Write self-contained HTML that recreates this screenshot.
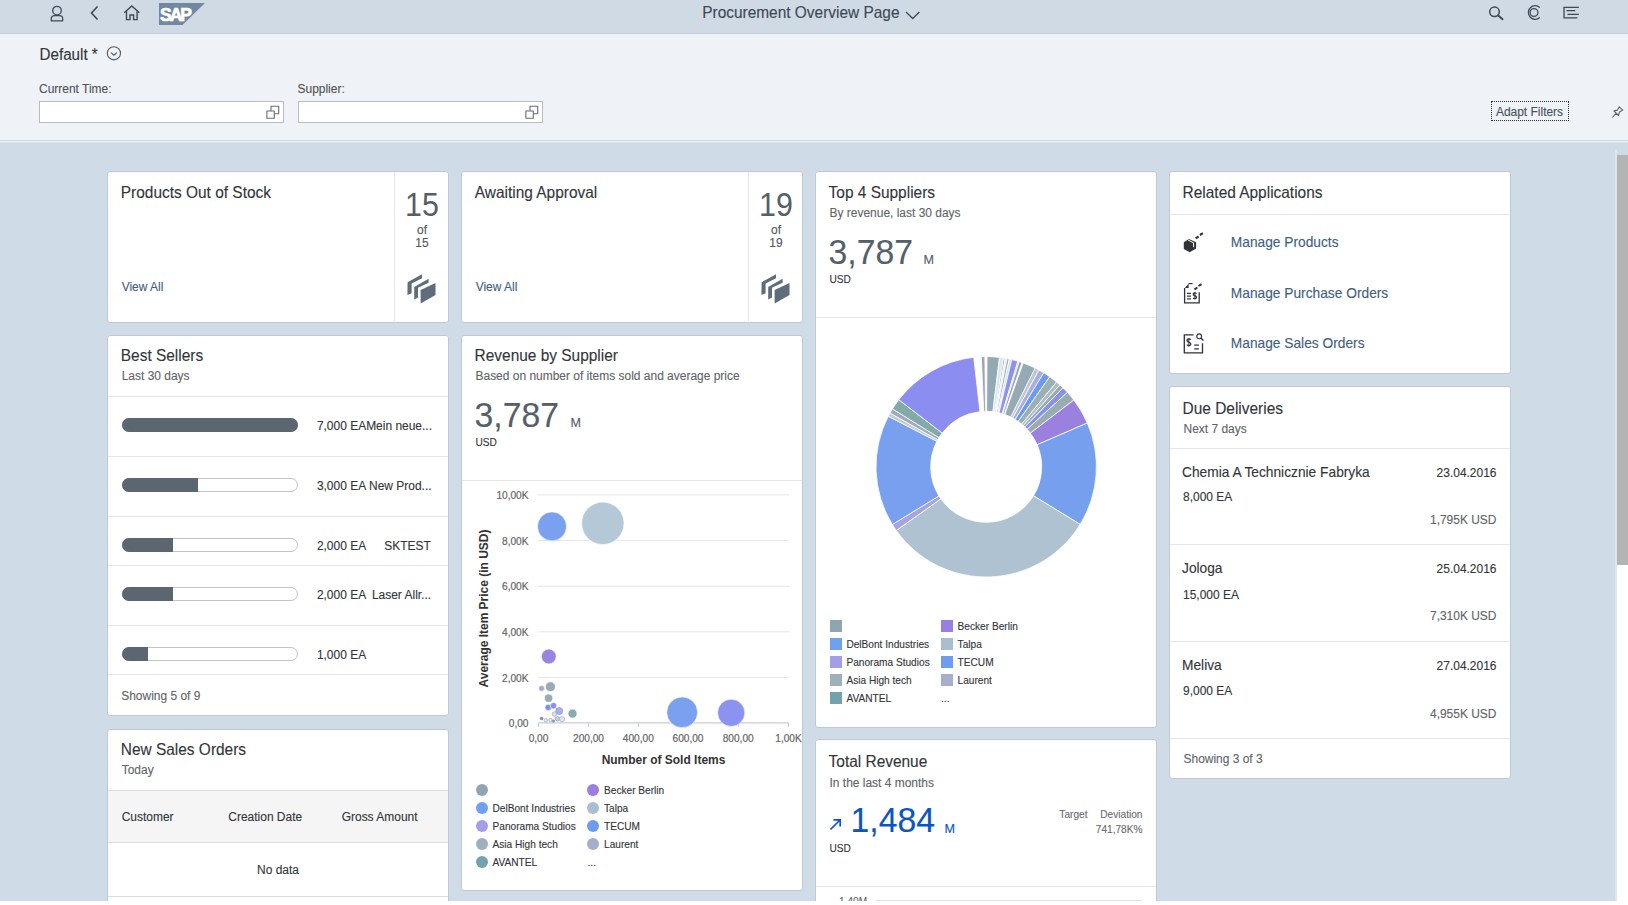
<!DOCTYPE html>
<html><head><meta charset="utf-8"><style>
html,body{margin:0;padding:0;}
body{width:1628px;height:905px;overflow:hidden;position:relative;font-family:"Liberation Sans", sans-serif;background:#cfdbe6;}
.t{position:absolute;white-space:nowrap;-webkit-text-stroke:0.12px currentColor;transform:scaleY(1.04);transform-origin:0 84.67%;}
svg{overflow:visible;}
</style></head><body>
<div style="position:absolute;left:0px;top:0px;width:1628px;height:34px;background:#cfdae5;"></div>
<div style="position:absolute;left:0px;top:33px;width:1628px;height:1px;background:#c6cfd9;"></div>
<div style="position:absolute;left:0px;top:34px;width:1628px;height:106px;background:#eff2f6;"></div>
<div style="position:absolute;left:0px;top:34px;width:1628px;height:1px;background:#eef3fb;"></div>
<div style="position:absolute;left:0px;top:140px;width:1628px;height:1px;background:#d2d9e1;"></div>
<div style="position:absolute;left:0px;top:141px;width:1628px;height:1px;background:#e8eff8;"></div>
<div style="position:absolute;left:0px;top:142px;width:1628px;height:1px;background:#dbe3ec;"></div>
<div style="position:absolute;left:0px;top:143px;width:1628px;height:758px;background:#cfdbe6;"></div>
<svg style="position:absolute;left:48px;top:3px" width="18" height="20" viewBox="0 0 18 20">
<circle cx="9" cy="7.6" r="4.3" fill="none" stroke="#3d4a56" stroke-width="1.3"/>
<path d="M3.3 17.8 V15.6 Q3.3 12.6 6.8 12.6 H11.2 Q14.7 12.6 14.7 15.6 V17.8 Z" fill="none" stroke="#3d4a56" stroke-width="1.3" stroke-linejoin="round"/>
</svg>
<svg style="position:absolute;left:88px;top:4px" width="14" height="18" viewBox="0 0 14 18">
<path d="M9.5 2.5 L3.5 9 L9.5 15.5" fill="none" stroke="#3d4a56" stroke-width="1.6"/>
</svg>
<svg style="position:absolute;left:122px;top:4px" width="20" height="18" viewBox="0 0 20 18">
<path d="M2.2 8.8 L9.8 2 L17.4 8.8" fill="none" stroke="#3d4a56" stroke-width="1.4"/>
<path d="M4.5 7.2 V15.6 H8 V11 H11.6 V15.6 H15.1 V7.2" fill="none" stroke="#3d4a56" stroke-width="1.4"/>
</svg>
<svg style="position:absolute;left:158.5px;top:3px" width="48" height="24" viewBox="0 0 48 24">
<path d="M0 0 H46 L23.5 22 H0 Z" fill="#7089a1"/>
<text x="1.0" y="17.6" font-family="Liberation Sans" font-weight="bold" font-size="17.5" fill="#ffffff" stroke="#ffffff" stroke-width="0.7" letter-spacing="-2">SAP</text>
</svg>
<div class="t" style="left:702.2px;top:4.72px;font-size:15.45px;line-height:15.45px;color:#3d4853;font-weight:normal;">Procurement Overview Page</div>
<svg style="position:absolute;left:904px;top:9px" width="18" height="12" viewBox="0 0 18 12">
<path d="M2 3 L8.7 9.5 L15.4 3" fill="none" stroke="#3d4a56" stroke-width="1.3"/>
</svg>
<svg style="position:absolute;left:1486px;top:3px" width="20" height="20" viewBox="0 0 20 20">
<circle cx="8.5" cy="8.8" r="4.8" fill="none" stroke="#3d4a56" stroke-width="1.5"/>
<path d="M12 12.3 L16.5 16.2" stroke="#3d4a56" stroke-width="2" stroke-linecap="round"/>
</svg>
<svg style="position:absolute;left:1524px;top:2px" width="20" height="20" viewBox="0 0 20 20">
<path d="M15.8 5.5 A6.8 6.8 0 1 0 15.8 15.5" fill="none" stroke="#3d4a56" stroke-width="1.3"/>
<circle cx="10" cy="10.5" r="3.9" fill="none" stroke="#3d4a56" stroke-width="1.3"/>
</svg>
<svg style="position:absolute;left:1560px;top:2px" width="22" height="20" viewBox="0 0 22 20">
<path d="M18.8 5.4 H4 V15.8 H17.4" fill="none" stroke="#3d4a56" stroke-width="1.3"/>
<path d="M6.5 8.7 H15.3 M7.5 12.3 H18.8" stroke="#3d4a56" stroke-width="1.3"/>
</svg>
<div class="t" style="left:39.5px;top:46.73px;font-size:15.2px;line-height:15.2px;color:#32363a;font-weight:normal;">Default *</div>
<svg style="position:absolute;left:105px;top:45px" width="17" height="17" viewBox="0 0 17 17">
<circle cx="8.9" cy="8.3" r="6.6" fill="none" stroke="#4f5963" stroke-width="1.1"/>
<path d="M6 7.6 L8.9 10.2 L11.8 7.6" fill="none" stroke="#4f5963" stroke-width="1.1"/>
</svg>
<div class="t" style="left:39px;top:84.07px;font-size:11.97px;line-height:11.97px;color:#4f5358;font-weight:normal;">Current Time:</div>
<div style="position:absolute;left:39px;top:101px;width:245px;height:22px;box-sizing:border-box;background:#fff;border:1px solid #b8bdc2;"></div>
<svg style="position:absolute;left:265px;top:105px" width="14" height="14" viewBox="0 0 14 14">
<path d="M1.9 6 H9.3 V13.2 H1.9 Z M6 6 V1.3 H13.7 V8.8 H9.3" fill="none" stroke="#666d74" stroke-width="1.1" stroke-linejoin="round"/>
</svg>
<div class="t" style="left:297.5px;top:84.07px;font-size:11.97px;line-height:11.97px;color:#4f5358;font-weight:normal;">Supplier:</div>
<div style="position:absolute;left:297.5px;top:101px;width:245px;height:22px;box-sizing:border-box;background:#fff;border:1px solid #b8bdc2;"></div>
<svg style="position:absolute;left:523.5px;top:105px" width="14" height="14" viewBox="0 0 14 14">
<path d="M1.9 6 H9.3 V13.2 H1.9 Z M6 6 V1.3 H13.7 V8.8 H9.3" fill="none" stroke="#666d74" stroke-width="1.1" stroke-linejoin="round"/>
</svg>
<div style="position:absolute;left:1491px;top:101px;width:78px;height:20px;box-sizing:border-box;border:1px dotted #2b2f33;"></div>
<div class="t" style="left:1529.5px;transform:translateX(-50%) scaleY(1.04);top:106.67px;font-size:11.97px;line-height:11.97px;color:#475360;font-weight:normal;">Adapt Filters</div>
<svg style="position:absolute;left:1610px;top:104px" width="15" height="15" viewBox="0 0 15 15">
<path d="M3.9 6.9 L7.5 6.1 L9.2 2.8 L12.8 6.1 L9.5 8 L8.5 11.5 Z M2.3 13.5 L6 9.4" fill="none" stroke="#5d666f" stroke-width="1.1" stroke-linejoin="round"/>
</svg>
<div style="position:absolute;left:107px;top:171px;width:342px;height:152px;box-sizing:border-box;background:#fff;border:1px solid #c0c9d3;border-radius:3px;"></div>
<div class="t" style="left:120.8px;top:185.02px;font-size:15.45px;line-height:15.45px;color:#32363a;font-weight:normal;">Products Out of Stock</div>
<div class="t" style="left:121.7px;top:281.67px;font-size:11.97px;line-height:11.97px;color:#41607f;font-weight:normal;">View All</div>
<div style="position:absolute;left:394px;top:172px;width:1px;height:149px;background:#e5e5e5;"></div>
<div class="t" style="top:189.86px;font-size:30.4px;line-height:30.4px;color:#545f69;font-weight:normal;left:422px;transform:translateX(-50%) scaleY(1.1);transform-origin:50% 84.67%;-webkit-text-stroke:0;">15</div>
<div class="t" style="left:422px;transform:translateX(-50%) scaleY(1.04);top:224.87px;font-size:11.97px;line-height:11.97px;color:#50575e;font-weight:normal;">of</div>
<div class="t" style="left:422px;transform:translateX(-50%) scaleY(1.04);top:238.47px;font-size:11.97px;line-height:11.97px;color:#50575e;font-weight:normal;">15</div>
<svg style="position:absolute;left:405px;top:272px" width="34" height="34" viewBox="0 0 34 34">
<path d="M2.6 10.2 L17 2.3 V6.3 L6.6 11.6 V21.2 L2.4 22.9 Z" fill="#5f6c79"/>
<path d="M9.2 15 L23.6 6.8 V10.7 L13 15.8 V25.6 L9.2 27.4 Z" fill="#5f6c79"/>
<path d="M15.6 18.1 L30.5 11 V23 L15.6 31.4 Z" fill="#5f6c79"/>
</svg>
<div style="position:absolute;left:461px;top:171px;width:342px;height:152px;box-sizing:border-box;background:#fff;border:1px solid #c0c9d3;border-radius:3px;"></div>
<div class="t" style="left:474.8px;top:185.02px;font-size:15.45px;line-height:15.45px;color:#32363a;font-weight:normal;">Awaiting Approval</div>
<div class="t" style="left:475.7px;top:281.67px;font-size:11.97px;line-height:11.97px;color:#41607f;font-weight:normal;">View All</div>
<div style="position:absolute;left:748px;top:172px;width:1px;height:149px;background:#e5e5e5;"></div>
<div class="t" style="top:189.86px;font-size:30.4px;line-height:30.4px;color:#545f69;font-weight:normal;left:776px;transform:translateX(-50%) scaleY(1.1);transform-origin:50% 84.67%;-webkit-text-stroke:0;">19</div>
<div class="t" style="left:776px;transform:translateX(-50%) scaleY(1.04);top:224.87px;font-size:11.97px;line-height:11.97px;color:#50575e;font-weight:normal;">of</div>
<div class="t" style="left:776px;transform:translateX(-50%) scaleY(1.04);top:238.47px;font-size:11.97px;line-height:11.97px;color:#50575e;font-weight:normal;">19</div>
<svg style="position:absolute;left:759px;top:272px" width="34" height="34" viewBox="0 0 34 34">
<path d="M2.6 10.2 L17 2.3 V6.3 L6.6 11.6 V21.2 L2.4 22.9 Z" fill="#5f6c79"/>
<path d="M9.2 15 L23.6 6.8 V10.7 L13 15.8 V25.6 L9.2 27.4 Z" fill="#5f6c79"/>
<path d="M15.6 18.1 L30.5 11 V23 L15.6 31.4 Z" fill="#5f6c79"/>
</svg>
<div style="position:absolute;left:107px;top:335px;width:342px;height:381px;box-sizing:border-box;background:#fff;border:1px solid #c0c9d3;border-radius:3px;"></div>
<div class="t" style="left:120.8px;top:348.02px;font-size:15.45px;line-height:15.45px;color:#32363a;font-weight:normal;">Best Sellers</div>
<div class="t" style="left:121.7px;top:371.17px;font-size:11.97px;line-height:11.97px;color:#616569;font-weight:normal;">Last 30 days</div>
<div style="position:absolute;left:108px;top:396px;width:340px;height:1px;background:#e5e5e5;"></div>
<div style="position:absolute;left:122px;top:418px;width:176px;height:14px;box-sizing:border-box;border:1px solid #c4c4c4;border-radius:7px;background:#fff;"></div>
<div style="position:absolute;left:122px;top:418px;width:176px;height:14px;background:#5b6670;border-radius:7px;"></div>
<div class="t" style="left:316.9px;top:420.77px;font-size:11.97px;line-height:11.97px;color:#32363a;font-weight:normal;">7,000 EAMein neue...</div>
<div style="position:absolute;left:108px;top:456px;width:340px;height:1px;background:#e5e5e5;"></div>
<div style="position:absolute;left:122px;top:478px;width:176px;height:14px;box-sizing:border-box;border:1px solid #c4c4c4;border-radius:7px;background:#fff;"></div>
<div style="position:absolute;left:122px;top:478px;width:75.67999999999999px;height:14px;background:#5b6670;border-radius:7px 0 0 7px;"></div>
<div class="t" style="left:316.9px;top:480.77px;font-size:11.97px;line-height:11.97px;color:#32363a;font-weight:normal;">3,000 EA</div>
<div class="t" style="left:369px;top:480.77px;font-size:11.97px;line-height:11.97px;color:#32363a;font-weight:normal;">New Prod...</div>
<div style="position:absolute;left:108px;top:516px;width:340px;height:1px;background:#e5e5e5;"></div>
<div style="position:absolute;left:122px;top:538px;width:176px;height:14px;box-sizing:border-box;border:1px solid #c4c4c4;border-radius:7px;background:#fff;"></div>
<div style="position:absolute;left:122px;top:538px;width:51.04px;height:14px;background:#5b6670;border-radius:7px 0 0 7px;"></div>
<div class="t" style="left:316.9px;top:540.97px;font-size:11.97px;line-height:11.97px;color:#32363a;font-weight:normal;">2,000 EA</div>
<div class="t" style="left:384.2px;top:540.97px;font-size:11.97px;line-height:11.97px;color:#32363a;font-weight:normal;">SKTEST</div>
<div style="position:absolute;left:108px;top:565px;width:340px;height:1px;background:#e5e5e5;"></div>
<div style="position:absolute;left:122px;top:587px;width:176px;height:14px;box-sizing:border-box;border:1px solid #c4c4c4;border-radius:7px;background:#fff;"></div>
<div style="position:absolute;left:122px;top:587px;width:51.04px;height:14px;background:#5b6670;border-radius:7px 0 0 7px;"></div>
<div class="t" style="left:316.9px;top:589.57px;font-size:11.97px;line-height:11.97px;color:#32363a;font-weight:normal;">2,000 EA</div>
<div class="t" style="left:371.9px;top:589.57px;font-size:11.97px;line-height:11.97px;color:#32363a;font-weight:normal;">Laser Allr...</div>
<div style="position:absolute;left:108px;top:625px;width:340px;height:1px;background:#e5e5e5;"></div>
<div style="position:absolute;left:122px;top:647px;width:176px;height:14px;box-sizing:border-box;border:1px solid #c4c4c4;border-radius:7px;background:#fff;"></div>
<div style="position:absolute;left:122px;top:647px;width:25.52px;height:14px;background:#5b6670;border-radius:7px 0 0 7px;"></div>
<div class="t" style="left:316.9px;top:649.87px;font-size:11.97px;line-height:11.97px;color:#32363a;font-weight:normal;">1,000 EA</div>
<div style="position:absolute;left:108px;top:674px;width:340px;height:1px;background:#e5e5e5;"></div>
<div class="t" style="left:121.2px;top:690.97px;font-size:11.97px;line-height:11.97px;color:#616569;font-weight:normal;">Showing 5 of 9</div>
<div style="position:absolute;left:107px;top:729px;width:342px;height:200px;box-sizing:border-box;background:#fff;border:1px solid #c0c9d3;border-radius:3px;"></div>
<div class="t" style="left:120.8px;top:742.32px;font-size:15.45px;line-height:15.45px;color:#32363a;font-weight:normal;">New Sales Orders</div>
<div class="t" style="left:121.7px;top:765.27px;font-size:11.97px;line-height:11.97px;color:#616569;font-weight:normal;">Today</div>
<div style="position:absolute;left:108px;top:790px;width:340px;height:53px;background:#f5f5f5;border-top:1px solid #dddddd;border-bottom:1px solid #dddddd;box-sizing:border-box;"></div>
<div class="t" style="left:121.7px;top:812.37px;font-size:11.97px;line-height:11.97px;color:#32363a;font-weight:normal;">Customer</div>
<div class="t" style="left:228.3px;top:812.37px;font-size:11.97px;line-height:11.97px;color:#32363a;font-weight:normal;">Creation Date</div>
<div class="t" style="left:341.7px;top:812.37px;font-size:11.97px;line-height:11.97px;color:#32363a;font-weight:normal;">Gross Amount</div>
<div class="t" style="left:278px;transform:translateX(-50%) scaleY(1.04);top:865.47px;font-size:11.97px;line-height:11.97px;color:#32363a;font-weight:normal;">No data</div>
<div style="position:absolute;left:108px;top:896px;width:340px;height:1px;background:#dddddd;"></div>
<div style="position:absolute;left:461px;top:335px;width:342px;height:556px;box-sizing:border-box;background:#fff;border:1px solid #c0c9d3;border-radius:3px;"></div>
<div class="t" style="left:474.6px;top:348.42px;font-size:15.45px;line-height:15.45px;color:#32363a;font-weight:normal;">Revenue by Supplier</div>
<div class="t" style="left:475.5px;top:370.97px;font-size:11.97px;line-height:11.97px;color:#616569;font-weight:normal;">Based on number of items sold and average price</div>
<div class="t" style="left:474.5px;top:398.98px;font-size:33.8px;line-height:33.8px;color:#545f69;font-weight:normal;">3,787</div>
<div class="t" style="left:570.5px;top:417.13px;font-size:12.6px;line-height:12.6px;color:#545f69;font-weight:normal;">M</div>
<div class="t" style="left:475.5px;top:437.91px;font-size:10.14px;line-height:10.14px;color:#32363a;font-weight:normal;">USD</div>
<div style="position:absolute;left:462px;top:480px;width:340px;height:1px;background:#e5e5e5;"></div>
<svg style="position:absolute;left:0;top:0" width="1628" height="905" viewBox="0 0 1628 905">
<line x1="538" y1="494.9" x2="789" y2="494.9" stroke="#e3e6e9" stroke-width="1"/>
<text x="528.5" y="499.09999999999997" text-anchor="end" font-family="Liberation Sans" font-size="10.14" fill="#666" stroke="#666" stroke-width="0.2">10,00K</text>
<line x1="538" y1="540.6" x2="789" y2="540.6" stroke="#e3e6e9" stroke-width="1"/>
<text x="528.5" y="544.8000000000001" text-anchor="end" font-family="Liberation Sans" font-size="10.14" fill="#666" stroke="#666" stroke-width="0.2">8,00K</text>
<line x1="538" y1="586.2" x2="789" y2="586.2" stroke="#e3e6e9" stroke-width="1"/>
<text x="528.5" y="590.4000000000001" text-anchor="end" font-family="Liberation Sans" font-size="10.14" fill="#666" stroke="#666" stroke-width="0.2">6,00K</text>
<line x1="538" y1="631.8" x2="789" y2="631.8" stroke="#e3e6e9" stroke-width="1"/>
<text x="528.5" y="636.0" text-anchor="end" font-family="Liberation Sans" font-size="10.14" fill="#666" stroke="#666" stroke-width="0.2">4,00K</text>
<line x1="538" y1="677.4" x2="789" y2="677.4" stroke="#e3e6e9" stroke-width="1"/>
<text x="528.5" y="681.6" text-anchor="end" font-family="Liberation Sans" font-size="10.14" fill="#666" stroke="#666" stroke-width="0.2">2,00K</text>
<line x1="538" y1="722.9" x2="789" y2="722.9" stroke="#e3e6e9" stroke-width="1"/>
<text x="528.5" y="727.1" text-anchor="end" font-family="Liberation Sans" font-size="10.14" fill="#666" stroke="#666" stroke-width="0.2">0,00</text>
<line x1="538" y1="722.9" x2="789" y2="722.9" stroke="#c9ccd0" stroke-width="1"/>
<line x1="538.5" y1="723" x2="538.5" y2="727" stroke="#c9ccd0" stroke-width="1"/>
<text x="538.5" y="741.8" text-anchor="middle" font-family="Liberation Sans" font-size="10.14" fill="#666" stroke="#666" stroke-width="0.2">0,00</text>
<line x1="588.5" y1="723" x2="588.5" y2="727" stroke="#c9ccd0" stroke-width="1"/>
<text x="588.5" y="741.8" text-anchor="middle" font-family="Liberation Sans" font-size="10.14" fill="#666" stroke="#666" stroke-width="0.2">200,00</text>
<line x1="638.3" y1="723" x2="638.3" y2="727" stroke="#c9ccd0" stroke-width="1"/>
<text x="638.3" y="741.8" text-anchor="middle" font-family="Liberation Sans" font-size="10.14" fill="#666" stroke="#666" stroke-width="0.2">400,00</text>
<line x1="688" y1="723" x2="688" y2="727" stroke="#c9ccd0" stroke-width="1"/>
<text x="688" y="741.8" text-anchor="middle" font-family="Liberation Sans" font-size="10.14" fill="#666" stroke="#666" stroke-width="0.2">600,00</text>
<line x1="738.2" y1="723" x2="738.2" y2="727" stroke="#c9ccd0" stroke-width="1"/>
<text x="738.2" y="741.8" text-anchor="middle" font-family="Liberation Sans" font-size="10.14" fill="#666" stroke="#666" stroke-width="0.2">800,00</text>
<line x1="788.5" y1="723" x2="788.5" y2="727" stroke="#c9ccd0" stroke-width="1"/>
<text x="788.5" y="741.8" text-anchor="middle" font-family="Liberation Sans" font-size="10.14" fill="#666" stroke="#666" stroke-width="0.2">1,00K</text>
<text x="663.5" y="764" text-anchor="middle" font-family="Liberation Sans" font-weight="bold" font-size="11.97" fill="#333">Number of Sold Items</text>
<text transform="translate(488.2 608.5) rotate(-90)" text-anchor="middle" font-family="Liberation Sans" font-weight="bold" font-size="11.97" fill="#333">Average Item Price (in USD)</text>
<circle cx="552.0" cy="526.4" r="14.5" fill="#7ba1ee" stroke="#ffffff" stroke-width="0.6"/>
<circle cx="602.8" cy="523.3" r="21.2" fill="#b5c8d8" stroke="#ffffff" stroke-width="0.6"/>
<circle cx="548.8" cy="656.5" r="7.4" fill="#9a84df" stroke="#ffffff" stroke-width="0.6"/>
<circle cx="541.6" cy="688.4" r="2.9" fill="#aaa6cc" stroke="#ffffff" stroke-width="0.6"/>
<circle cx="550.4" cy="686.7" r="4.9" fill="#98aab4" stroke="#ffffff" stroke-width="0.6"/>
<circle cx="548.6" cy="698.2" r="4.1" fill="#98aab4" stroke="#ffffff" stroke-width="0.6"/>
<circle cx="548.2" cy="707.4" r="3.2" fill="#7f8fee" stroke="#ffffff" stroke-width="0.6"/>
<circle cx="553.5" cy="705.7" r="3.2" fill="#8b90ee" stroke="#ffffff" stroke-width="0.6"/>
<circle cx="559.2" cy="711.0" r="3.5" fill="#a9b2e6" stroke="#7f88c8" stroke-width="0.6"/>
<circle cx="554.4" cy="714.0" r="2.3" fill="#d8dde6" stroke="#a0a8b8" stroke-width="0.6"/>
<circle cx="572.5" cy="713.6" r="4.5" fill="#87abb0" stroke="#ffffff" stroke-width="0.6"/>
<circle cx="541.6" cy="718.5" r="1.5" fill="#7f8fb8" stroke="#7f8fb8" stroke-width="0.6"/>
<circle cx="545.8" cy="720.3" r="1.8" fill="#e0e4ec" stroke="#9aa4b8" stroke-width="0.6"/>
<circle cx="550.5" cy="720.0" r="1.8" fill="#e0e4ec" stroke="#9aa4b8" stroke-width="0.6"/>
<circle cx="557.5" cy="718.8" r="2.2" fill="#c8d0e0" stroke="#7f8aa8" stroke-width="0.6"/>
<circle cx="562.0" cy="719.2" r="2.6" fill="#e0e4ec" stroke="#9aa4b8" stroke-width="0.6"/>
<circle cx="553.5" cy="721.0" r="1.3" fill="#8a98b8" stroke="#8a98b8" stroke-width="0.6"/>
<circle cx="682.2" cy="712.3" r="15.4" fill="#7aa0ef" stroke="#ffffff" stroke-width="0.6"/>
<circle cx="731.2" cy="712.8" r="13.6" fill="#8b92f0" stroke="#ffffff" stroke-width="0.6"/>
</svg>
<div style="position:absolute;left:475.8px;top:783.8px;width:12px;height:12px;background:#8fa5b0;border-radius:50%;"></div>
<div style="position:absolute;left:587px;top:783.8px;width:12px;height:12px;background:#9a7fe0;border-radius:50%;"></div>
<div class="t" style="left:604px;top:785.71px;font-size:10.14px;line-height:10.14px;color:#32363a;font-weight:normal;">Becker Berlin</div>
<div style="position:absolute;left:475.8px;top:801.8px;width:12px;height:12px;background:#70a0f0;border-radius:50%;"></div>
<div class="t" style="left:492.5px;top:803.71px;font-size:10.14px;line-height:10.14px;color:#32363a;font-weight:normal;">DelBont Industries</div>
<div style="position:absolute;left:587px;top:801.8px;width:12px;height:12px;background:#a9bfd0;border-radius:50%;"></div>
<div class="t" style="left:604px;top:803.71px;font-size:10.14px;line-height:10.14px;color:#32363a;font-weight:normal;">Talpa</div>
<div style="position:absolute;left:475.8px;top:819.7px;width:12px;height:12px;background:#a49ee8;border-radius:50%;"></div>
<div class="t" style="left:492.5px;top:821.61px;font-size:10.14px;line-height:10.14px;color:#32363a;font-weight:normal;">Panorama Studios</div>
<div style="position:absolute;left:587px;top:819.7px;width:12px;height:12px;background:#6d9cf0;border-radius:50%;"></div>
<div class="t" style="left:604px;top:821.61px;font-size:10.14px;line-height:10.14px;color:#32363a;font-weight:normal;">TECUM</div>
<div style="position:absolute;left:475.8px;top:837.6px;width:12px;height:12px;background:#9eb0bb;border-radius:50%;"></div>
<div class="t" style="left:492.5px;top:839.51px;font-size:10.14px;line-height:10.14px;color:#32363a;font-weight:normal;">Asia High tech</div>
<div style="position:absolute;left:587px;top:837.6px;width:12px;height:12px;background:#a6aecc;border-radius:50%;"></div>
<div class="t" style="left:604px;top:839.51px;font-size:10.14px;line-height:10.14px;color:#32363a;font-weight:normal;">Laurent</div>
<div style="position:absolute;left:475.8px;top:855.6px;width:12px;height:12px;background:#72a3ad;border-radius:50%;"></div>
<div class="t" style="left:492.5px;top:857.51px;font-size:10.14px;line-height:10.14px;color:#32363a;font-weight:normal;">AVANTEL</div>
<div class="t" style="left:587.5px;top:857.51px;font-size:10.14px;line-height:10.14px;color:#32363a;font-weight:normal;">...</div>
<div style="position:absolute;left:815px;top:171px;width:342px;height:557px;box-sizing:border-box;background:#fff;border:1px solid #c0c9d3;border-radius:3px;"></div>
<div class="t" style="left:828.6px;top:185.12px;font-size:15.45px;line-height:15.45px;color:#32363a;font-weight:normal;">Top 4 Suppliers</div>
<div class="t" style="left:829.5px;top:207.97px;font-size:11.97px;line-height:11.97px;color:#616569;font-weight:normal;">By revenue, last 30 days</div>
<div class="t" style="left:828.5px;top:235.58px;font-size:33.8px;line-height:33.8px;color:#545f69;font-weight:normal;">3,787</div>
<div class="t" style="left:923.5px;top:253.73px;font-size:12.6px;line-height:12.6px;color:#545f69;font-weight:normal;">M</div>
<div class="t" style="left:829.5px;top:275.21px;font-size:10.14px;line-height:10.14px;color:#32363a;font-weight:normal;">USD</div>
<div style="position:absolute;left:816px;top:317px;width:340px;height:1px;background:#e5e5e5;"></div>
<svg style="position:absolute;left:0;top:0" width="1628" height="905" viewBox="0 0 1628 905">
<path d="M981.32 356.71 A110.2 110.2 0 0 1 984.85 356.61 L985.52 411.30 A55.5 55.5 0 0 0 983.74 411.35 Z" fill="#9ba3b5" stroke="#fff" stroke-width="0.8"/>
<path d="M987.07 356.60 A110.2 110.2 0 0 1 999.52 357.41 L992.91 411.71 A55.5 55.5 0 0 0 986.64 411.30 Z" fill="#93a9b3" stroke="#fff" stroke-width="0.8"/>
<path d="M999.52 357.41 A110.2 110.2 0 0 1 1003.53 357.97 L994.93 411.99 A55.5 55.5 0 0 0 992.91 411.71 Z" fill="#dbe6ee" stroke="#fff" stroke-width="0.8"/>
<path d="M1003.53 357.97 A110.2 110.2 0 0 1 1005.11 358.23 L995.72 412.12 A55.5 55.5 0 0 0 994.93 411.99 Z" fill="#8a94d8" stroke="#fff" stroke-width="0.8"/>
<path d="M1005.11 358.23 A110.2 110.2 0 0 1 1006.85 358.55 L996.60 412.28 A55.5 55.5 0 0 0 995.72 412.12 Z" fill="#e6edf4" stroke="#fff" stroke-width="0.8"/>
<path d="M1006.85 358.55 A110.2 110.2 0 0 1 1009.30 359.05 L997.83 412.53 A55.5 55.5 0 0 0 996.60 412.28 Z" fill="#a5b3bb" stroke="#fff" stroke-width="0.8"/>
<path d="M1009.30 359.05 A110.2 110.2 0 0 1 1011.74 359.60 L999.06 412.81 A55.5 55.5 0 0 0 997.83 412.53 Z" fill="#d6e0ea" stroke="#fff" stroke-width="0.8"/>
<path d="M1011.74 359.60 A110.2 110.2 0 0 1 1017.87 361.25 L1002.15 413.64 A55.5 55.5 0 0 0 999.06 412.81 Z" fill="#8b92f0" stroke="#fff" stroke-width="0.8"/>
<path d="M1017.87 361.25 A110.2 110.2 0 0 1 1019.15 361.64 L1002.80 413.84 A55.5 55.5 0 0 0 1002.15 413.64 Z" fill="#c8c8f0" stroke="#fff" stroke-width="0.8"/>
<path d="M1019.15 361.64 A110.2 110.2 0 0 1 1022.00 362.58 L1004.23 414.31 A55.5 55.5 0 0 0 1002.80 413.84 Z" fill="#9aa0c0" stroke="#fff" stroke-width="0.8"/>
<path d="M1023.17 362.99 A110.2 110.2 0 0 1 1035.20 368.09 L1010.88 417.09 A55.5 55.5 0 0 0 1004.82 414.52 Z" fill="#96aab4" stroke="#fff" stroke-width="0.8"/>
<path d="M1035.20 368.09 A110.2 110.2 0 0 1 1038.95 370.05 L1012.77 418.07 A55.5 55.5 0 0 0 1010.88 417.09 Z" fill="#b9c8d5" stroke="#fff" stroke-width="0.8"/>
<path d="M1038.95 370.05 A110.2 110.2 0 0 1 1043.78 372.84 L1015.20 419.48 A55.5 55.5 0 0 0 1012.77 418.07 Z" fill="#a9aee0" stroke="#fff" stroke-width="0.8"/>
<path d="M1043.78 372.84 A110.2 110.2 0 0 1 1049.72 376.75 L1018.19 421.45 A55.5 55.5 0 0 0 1015.20 419.48 Z" fill="#6d9af0" stroke="#fff" stroke-width="0.8"/>
<path d="M1049.72 376.75 A110.2 110.2 0 0 1 1056.59 382.01 L1021.65 424.10 A55.5 55.5 0 0 0 1018.19 421.45 Z" fill="#9bb0b5" stroke="#fff" stroke-width="0.8"/>
<path d="M1056.59 382.01 A110.2 110.2 0 0 1 1059.94 384.91 L1023.34 425.56 A55.5 55.5 0 0 0 1021.65 424.10 Z" fill="#aebdc8" stroke="#fff" stroke-width="0.8"/>
<path d="M1059.94 384.91 A110.2 110.2 0 0 1 1063.03 387.80 L1024.89 427.01 A55.5 55.5 0 0 0 1023.34 425.56 Z" fill="#96abb0" stroke="#fff" stroke-width="0.8"/>
<path d="M1063.03 387.80 A110.2 110.2 0 0 1 1067.45 392.35 L1027.12 429.30 A55.5 55.5 0 0 0 1024.89 427.01 Z" fill="#8a90ee" stroke="#fff" stroke-width="0.8"/>
<path d="M1067.45 392.35 A110.2 110.2 0 0 1 1073.86 400.02 L1030.35 433.17 A55.5 55.5 0 0 0 1027.12 429.30 Z" fill="#98acb3" stroke="#fff" stroke-width="0.8"/>
<path d="M1073.86 400.02 A110.2 110.2 0 0 1 1087.34 423.03 L1037.14 444.76 A55.5 55.5 0 0 0 1030.35 433.17 Z" fill="#9a80df" stroke="#fff" stroke-width="0.8"/>
<path d="M1087.34 423.03 A110.2 110.2 0 0 1 1080.16 524.38 L1033.52 495.80 A55.5 55.5 0 0 0 1037.14 444.76 Z" fill="#76a0ee" stroke="#fff" stroke-width="0.8"/>
<path d="M1080.16 524.38 A110.2 110.2 0 0 1 896.26 530.48 L940.90 498.87 A55.5 55.5 0 0 0 1033.52 495.80 Z" fill="#afc2d2" stroke="#fff" stroke-width="0.8"/>
<path d="M896.26 530.48 A110.2 110.2 0 0 1 892.34 524.54 L938.93 495.88 A55.5 55.5 0 0 0 940.90 498.87 Z" fill="#a7a3e2" stroke="#fff" stroke-width="0.8"/>
<path d="M892.34 524.54 A110.2 110.2 0 0 1 888.27 416.26 L936.88 441.34 A55.5 55.5 0 0 0 938.93 495.88 Z" fill="#78a0ee" stroke="#fff" stroke-width="0.8"/>
<path d="M888.27 416.26 A110.2 110.2 0 0 1 890.00 413.04 L937.75 439.72 A55.5 55.5 0 0 0 936.88 441.34 Z" fill="#c0ccd8" stroke="#fff" stroke-width="0.8"/>
<path d="M890.00 413.04 A110.2 110.2 0 0 1 892.44 408.89 L938.98 437.64 A55.5 55.5 0 0 0 937.75 439.72 Z" fill="#a2a9bb" stroke="#fff" stroke-width="0.8"/>
<path d="M892.44 408.89 A110.2 110.2 0 0 1 898.77 399.71 L942.17 433.01 A55.5 55.5 0 0 0 938.98 437.64 Z" fill="#82aaa8" stroke="#fff" stroke-width="0.8"/>
<path d="M898.77 399.71 A110.2 110.2 0 0 1 973.73 357.31 L979.92 411.66 A55.5 55.5 0 0 0 942.17 433.01 Z" fill="#8b8ef0" stroke="#fff" stroke-width="0.8"/>
</svg>
<div style="position:absolute;left:829.5px;top:620.3px;width:12px;height:12px;background:#8fa5b0;"></div>
<div style="position:absolute;left:940.8px;top:620.3px;width:12px;height:12px;background:#9a7fe0;"></div>
<div class="t" style="left:957.6px;top:622.21px;font-size:10.14px;line-height:10.14px;color:#32363a;font-weight:normal;">Becker Berlin</div>
<div style="position:absolute;left:829.5px;top:638.3px;width:12px;height:12px;background:#70a0f0;"></div>
<div class="t" style="left:846.4px;top:640.21px;font-size:10.14px;line-height:10.14px;color:#32363a;font-weight:normal;">DelBont Industries</div>
<div style="position:absolute;left:940.8px;top:638.3px;width:12px;height:12px;background:#a9bfd0;"></div>
<div class="t" style="left:957.6px;top:640.21px;font-size:10.14px;line-height:10.14px;color:#32363a;font-weight:normal;">Talpa</div>
<div style="position:absolute;left:829.5px;top:656.2px;width:12px;height:12px;background:#a49ee8;"></div>
<div class="t" style="left:846.4px;top:658.11px;font-size:10.14px;line-height:10.14px;color:#32363a;font-weight:normal;">Panorama Studios</div>
<div style="position:absolute;left:940.8px;top:656.2px;width:12px;height:12px;background:#6d9cf0;"></div>
<div class="t" style="left:957.6px;top:658.11px;font-size:10.14px;line-height:10.14px;color:#32363a;font-weight:normal;">TECUM</div>
<div style="position:absolute;left:829.5px;top:674.2px;width:12px;height:12px;background:#9eb0bb;"></div>
<div class="t" style="left:846.4px;top:676.11px;font-size:10.14px;line-height:10.14px;color:#32363a;font-weight:normal;">Asia High tech</div>
<div style="position:absolute;left:940.8px;top:674.2px;width:12px;height:12px;background:#a6aecc;"></div>
<div class="t" style="left:957.6px;top:676.11px;font-size:10.14px;line-height:10.14px;color:#32363a;font-weight:normal;">Laurent</div>
<div style="position:absolute;left:829.5px;top:692.1px;width:12px;height:12px;background:#72a3ad;"></div>
<div class="t" style="left:846.4px;top:694.01px;font-size:10.14px;line-height:10.14px;color:#32363a;font-weight:normal;">AVANTEL</div>
<div class="t" style="left:941px;top:694.01px;font-size:10.14px;line-height:10.14px;color:#32363a;font-weight:normal;">...</div>
<div style="position:absolute;left:815px;top:739px;width:342px;height:200px;box-sizing:border-box;background:#fff;border:1px solid #c0c9d3;border-radius:3px;"></div>
<div class="t" style="left:828.6px;top:754.32px;font-size:15.45px;line-height:15.45px;color:#32363a;font-weight:normal;">Total Revenue</div>
<div class="t" style="left:829.5px;top:777.67px;font-size:11.97px;line-height:11.97px;color:#616569;font-weight:normal;">In the last 4 months</div>
<svg style="position:absolute;left:828px;top:816px" width="16" height="16" viewBox="0 0 16 16"><path d="M2.5 13.5 L12 4 M5.5 3.8 H12.2 V10.5" fill="none" stroke="#0b55c2" stroke-width="1.7"/></svg>
<div class="t" style="left:850.5px;top:804.38px;font-size:33.8px;line-height:33.8px;color:#0b55c2;font-weight:normal;">1,484</div>
<div class="t" style="left:944.5px;top:822.53px;font-size:12.6px;line-height:12.6px;color:#0b55c2;font-weight:normal;">M</div>
<div class="t" style="left:829.5px;top:844.21px;font-size:10.14px;line-height:10.14px;color:#32363a;font-weight:normal;">USD</div>
<div class="t" style="right:540.5px;top:810.31px;font-size:10.14px;line-height:10.14px;color:#6a6d70;font-weight:normal;">Target</div>
<div class="t" style="right:485.5px;top:810.31px;font-size:10.14px;line-height:10.14px;color:#6a6d70;font-weight:normal;">Deviation</div>
<div class="t" style="right:485.5px;top:824.61px;font-size:10.14px;line-height:10.14px;color:#6a6d70;font-weight:normal;">741,78K%</div>
<div style="position:absolute;left:816px;top:886px;width:340px;height:1px;background:#e5e5e5;"></div>
<div class="t" style="left:839px;top:896.71px;font-size:10.14px;line-height:10.14px;color:#666;font-weight:normal;">1,40M</div>
<div style="position:absolute;left:876px;top:900px;width:266px;height:1px;background:#e0e0e0;"></div>
<div style="position:absolute;left:1169px;top:171px;width:342px;height:203px;box-sizing:border-box;background:#fff;border:1px solid #c0c9d3;border-radius:3px;"></div>
<div class="t" style="left:1182.6px;top:185.02px;font-size:15.45px;line-height:15.45px;color:#32363a;font-weight:normal;">Related Applications</div>
<div style="position:absolute;left:1170px;top:214px;width:340px;height:1px;background:#e5e5e5;"></div>
<div class="t" style="left:1230.8px;top:235.96px;font-size:13.75px;line-height:13.75px;color:#41607f;font-weight:normal;">Manage Products</div>
<div class="t" style="left:1230.8px;top:286.96px;font-size:13.75px;line-height:13.75px;color:#41607f;font-weight:normal;">Manage Purchase Orders</div>
<div class="t" style="left:1230.8px;top:336.96px;font-size:13.75px;line-height:13.75px;color:#41607f;font-weight:normal;">Manage Sales Orders</div>
<svg style="position:absolute;left:1180px;top:229px" width="28" height="28" viewBox="0 0 28 28"><path d="M3.8 13.2 L8.9 9.9 L16.1 13.2 V19.5 L9.8 23.2 L3.8 19.9 Z" fill="#2f3338"/><path d="M7.9 10.9 L13.6 13.9 V18.2" fill="none" stroke="#fff" stroke-width="1"/><path d="M15.6 9.3 L18.6 7.5 M19.9 6 L22.9 4.2" stroke="#2f3338" stroke-width="2.1"/></svg>
<svg style="position:absolute;left:1180px;top:280px" width="28" height="28" viewBox="0 0 28 28"><path d="M4.6 7.9 V22.9 H19.2 V12.3" fill="none" stroke="#2f3338" stroke-width="1.3"/><path d="M4.8 7.9 L8.6 3.8 V7.9 Z" fill="#2f3338"/><path d="M8.6 3.6 H12.6" stroke="#2f3338" stroke-width="1.2"/><path d="M14.4 9.3 L17.4 7.5 M18.5 6 L21.5 4.2" stroke="#2f3338" stroke-width="2"/><path d="M7.1 13.4 H10.9 M7.1 16.1 H10.9 M7.1 18.8 H10.9" stroke="#2f3338" stroke-width="1.2"/><path d="M16.52 13.57 Q15.41 12.64 14.05 13.06 Q12.86 13.66 13.54 14.93 Q14.13 15.53 15.24 15.96 Q16.94 16.63 16.34 17.91 Q15.67 18.84 14.05 18.42 Q13.46 18.25 13.20 17.82" fill="none" stroke="#2f3338" stroke-width="1.3"/><path d="M14.90 12.04 V19.36" stroke="#2f3338" stroke-width="1"/></svg>
<svg style="position:absolute;left:1180px;top:330px" width="28" height="28" viewBox="0 0 28 28"><path d="M13.6 4.8 H4.3 V22.9 H22.5 V13.2" fill="none" stroke="#2f3338" stroke-width="1.3"/><path d="M10.80 9.70 Q9.50 8.60 7.90 9.10 Q6.50 9.80 7.30 11.30 Q8.00 12.00 9.30 12.50 Q11.30 13.30 10.60 14.80 Q9.80 15.90 7.90 15.40 Q7.20 15.20 6.90 14.70" fill="none" stroke="#2f3338" stroke-width="1.3"/><path d="M8.90 7.90 V16.50" stroke="#2f3338" stroke-width="1"/><path d="M14.2 15.2 H18.9 M14.2 18.8 H18.9" stroke="#2f3338" stroke-width="1.3"/><circle cx="19.2" cy="6.3" r="2.4" fill="none" stroke="#2f3338" stroke-width="1.1"/><path d="M20.9 8 L23.4 10.4" stroke="#2f3338" stroke-width="1.4"/></svg>
<div style="position:absolute;left:1169px;top:386px;width:342px;height:393px;box-sizing:border-box;background:#fff;border:1px solid #c0c9d3;border-radius:3px;"></div>
<div class="t" style="left:1182.6px;top:400.92px;font-size:15.45px;line-height:15.45px;color:#32363a;font-weight:normal;">Due Deliveries</div>
<div class="t" style="left:1183.5px;top:423.67px;font-size:11.97px;line-height:11.97px;color:#616569;font-weight:normal;">Next 7 days</div>
<div style="position:absolute;left:1170px;top:448px;width:340px;height:1px;background:#e5e5e5;"></div>
<div class="t" style="left:1182px;top:465.66px;font-size:13.75px;line-height:13.75px;color:#32363a;font-weight:normal;">Chemia A Technicznie Fabryka</div>
<div class="t" style="right:131.5px;top:467.97px;font-size:11.97px;line-height:11.97px;color:#32363a;font-weight:normal;">23.04.2016</div>
<div class="t" style="left:1183px;top:491.97px;font-size:11.97px;line-height:11.97px;color:#32363a;font-weight:normal;">8,000 EA</div>
<div class="t" style="right:131.5px;top:514.67px;font-size:11.97px;line-height:11.97px;color:#616569;font-weight:normal;">1,795K USD</div>
<div style="position:absolute;left:1170px;top:544px;width:340px;height:1px;background:#e5e5e5;"></div>
<div class="t" style="left:1182px;top:562.16px;font-size:13.75px;line-height:13.75px;color:#32363a;font-weight:normal;">Jologa</div>
<div class="t" style="right:131.5px;top:563.97px;font-size:11.97px;line-height:11.97px;color:#32363a;font-weight:normal;">25.04.2016</div>
<div class="t" style="left:1183px;top:589.87px;font-size:11.97px;line-height:11.97px;color:#32363a;font-weight:normal;">15,000 EA</div>
<div class="t" style="right:131.5px;top:610.67px;font-size:11.97px;line-height:11.97px;color:#616569;font-weight:normal;">7,310K USD</div>
<div style="position:absolute;left:1170px;top:641px;width:340px;height:1px;background:#e5e5e5;"></div>
<div class="t" style="left:1182px;top:658.56px;font-size:13.75px;line-height:13.75px;color:#32363a;font-weight:normal;">Meliva</div>
<div class="t" style="right:131.5px;top:660.87px;font-size:11.97px;line-height:11.97px;color:#32363a;font-weight:normal;">27.04.2016</div>
<div class="t" style="left:1183px;top:685.87px;font-size:11.97px;line-height:11.97px;color:#32363a;font-weight:normal;">9,000 EA</div>
<div class="t" style="right:131.5px;top:708.97px;font-size:11.97px;line-height:11.97px;color:#616569;font-weight:normal;">4,955K USD</div>
<div style="position:absolute;left:1170px;top:738px;width:340px;height:1px;background:#e5e5e5;"></div>
<div class="t" style="left:1183.5px;top:754.27px;font-size:11.97px;line-height:11.97px;color:#616569;font-weight:normal;">Showing 3 of 3</div>
<div style="position:absolute;left:1615px;top:150px;width:2px;height:751px;background:#dde5ee;"></div>
<div style="position:absolute;left:1617px;top:155px;width:11px;height:410px;background:#b4b4b4;"></div>
<div style="position:absolute;left:1617px;top:565px;width:11px;height:336px;background:#ffffff;"></div>
<div style="position:absolute;left:0px;top:901px;width:1628px;height:4px;background:#ffffff;"></div>
</body></html>
